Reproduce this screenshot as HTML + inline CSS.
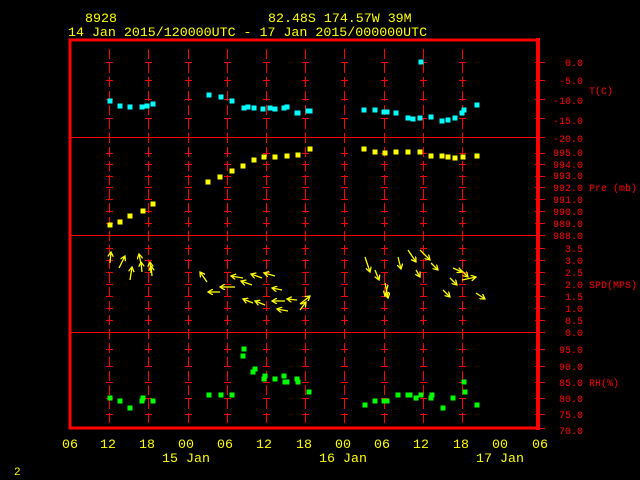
<!DOCTYPE html>
<html><head><meta charset="utf-8"><style>
html,body{margin:0;padding:0;background:#000;width:640px;height:480px;overflow:hidden}
svg{display:block}
text{font-family:"Liberation Mono",monospace}
.y{fill:#ffff00;font-size:13.3px}
.r{fill:#ff0000;font-size:10px}
</style></head><body>
<svg id="s" width="640" height="480" xmlns="http://www.w3.org/2000/svg">
<defs><marker id="ah" markerWidth="6" markerHeight="6" refX="5" refY="3" orient="auto" markerUnits="userSpaceOnUse"><path d="M0,0 L5,3 L0,6" fill="none" stroke="#ffff00" stroke-width="1.3"/></marker></defs>
<g id="grid"></g>
<rect x="70" y="40" width="468" height="388" fill="none" stroke="#ff0000" stroke-width="3"/>
<line x1="538" y1="38" x2="538" y2="430" stroke="#ff0000" stroke-width="4"/>
<g stroke="#ff0000" stroke-width="1"><line x1="70" y1="137.5" x2="538" y2="137.5"/><line x1="70" y1="235.5" x2="538" y2="235.5"/><line x1="70" y1="332.5" x2="538" y2="332.5"/></g>
<g id="data"></g>
<text class="y" x="85" y="22">8928</text>
<text class="y" x="268" y="22">82.48S  174.57W   39M</text>
<text class="y" x="68" y="36">14 Jan 2015/120000UTC - 17 Jan 2015/000000UTC</text>
<g class="r" text-anchor="end">
<text x="583" y="66">0.0</text><text x="583" y="84">-5.0</text><text x="583" y="104">-10.0</text><text x="583" y="124">-15.0</text><text x="583" y="142">-20.0</text>
<text x="583" y="156">995.0</text><text x="583" y="168">994.0</text><text x="583" y="179">993.0</text><text x="583" y="191">992.0</text><text x="583" y="203">991.0</text><text x="583" y="215">990.0</text><text x="583" y="227">989.0</text><text x="583" y="239">988.0</text>
<text x="583" y="252">3.5</text><text x="583" y="264">3.0</text><text x="583" y="276">2.5</text><text x="583" y="288">2.0</text><text x="583" y="300">1.5</text><text x="583" y="312">1.0</text><text x="583" y="324">0.5</text><text x="583" y="336">0.0</text>
<text x="583" y="353">95.0</text><text x="583" y="370">90.0</text><text x="583" y="386">85.0</text><text x="583" y="402">80.0</text><text x="583" y="418">75.0</text><text x="583" y="434">70.0</text>
</g>
<g class="r"><text x="589" y="94">T(C)</text><text x="589" y="191">Pre (mb)</text><text x="589" y="288">SPD(MPS)</text><text x="589" y="386">RH(%)</text></g>
<g class="y" text-anchor="middle">
<text x="70" y="448">06</text><text x="108" y="448">12</text><text x="147" y="448">18</text><text x="186" y="448">00</text><text x="225" y="448">06</text><text x="264" y="448">12</text><text x="304" y="448">18</text><text x="343" y="448">00</text><text x="382" y="448">06</text><text x="421" y="448">12</text><text x="461" y="448">18</text><text x="500" y="448">00</text><text x="540" y="448">06</text>
<text x="186" y="462">15 Jan</text><text x="343" y="462">16 Jan</text><text x="500" y="462">17 Jan</text>
</g>
<text class="y" x="14" y="475" style="font-size:11px">2</text>
</svg>
<script>
var NS="http://www.w3.org/2000/svg";
function el(p,t,a){var e=document.createElementNS(NS,t);for(var k in a)e.setAttribute(k,a[k]);p.appendChild(e);return e;}
var g=document.getElementById("grid"),d=document.getElementById("data");
var rows=[62,80,99,118,153,164,176,187,199,211,223,248,260,272,284,296,308,320,349,366,382,398,414];
for(var k=1;k<=11;k++){var x=70+39.2*k;x=Math.round(x)+0.5;
 if(k<11){el(g,"line",{x1:x,y1:49,x2:x,y2:425,stroke:"#f00","stroke-width":1,"stroke-dasharray":"10,4"});
 rows.forEach(function(y){el(g,"line",{x1:x-3.5,y1:y+0.5,x2:x+3.5,y2:y+0.5,stroke:"#f00"});});}}
rows.concat([137,235,332,428]).forEach(function(y){el(g,"line",{x1:535,y1:y+0.5,x2:545,y2:y+0.5,stroke:"#f00"});});
function sq(arr,c){arr.forEach(function(p){el(d,"rect",{x:p[0]-2.5,y:p[1]-2.5,width:5,height:5,fill:c});});}
sq([[110,101],[120,106],[130,107],[142,107],[147,106],[153,104],[209,95],[221,97],[232,101],[244,108],[248,107],[254,108],[263,109],[270,108],[275,109],[284,108],[287,107],[297,113],[298,113],[308,111],[310,111],[364,110],[375,110],[384,112],[387,112],[396,113],[408,118],[413,119],[420,118],[421,62],[431,117],[442,121],[448,120],[455,118],[462,113],[464,110],[477,105]],"#00ffff");
sq([[110,225],[120,222],[130,216],[143,211],[153,204],[208,182],[220,177],[232,171],[243,166],[254,160],[264,157],[275,157],[287,156],[298,155],[310,149],[364,149],[375,152],[385,153],[396,152],[408,152],[420,152],[431,156],[442,156],[448,157],[455,158],[463,157],[477,156]],"#ffff00");
sq([[110,398],[120,401],[130,408],[142,401],[143,398],[153,401],[209,395],[221,395],[232,395],[243,356],[244,349],[253,372],[255,369],[264,379],[265,376],[275,379],[284,376],[285,382],[287,382],[297,379],[298,382],[309,392],[365,405],[375,401],[384,401],[387,401],[398,395],[408,395],[410,395],[416,398],[421,395],[431,398],[432,395],[443,408],[453,398],[464,382],[465,392],[477,405]],"#00ff00");
[[110,263,111,252],[119,268,125,256],[130,280,132,267],[141,264,139,254],[142,272,141,262],[151,273,150,262],[152,276,151,266],
[207,282,200,272],[220,292,208,292],[235,287,220,287],[243,278,231,276],[252,285,241,281],[262,278,251,274],[275,276,264,273],[253,303,243,299],[265,305,255,301],[285,301,272,301],[297,300,287,299],[288,311,277,309],[300,310,306,302],[300,304,310,296],[282,290,272,288],
[365,257,370,272],[375,270,379,280],[385,283,388,298],[388,285,385,296],[398,257,401,269],[408,250,416,262],[420,250,430,260],[431,263,438,270],[416,270,420,277],[453,268,462,272],[450,278,457,285],[462,280,476,277],[443,290,450,297],[476,293,485,299],[461,270,468,277]
].forEach(function(a){el(d,"line",{x1:a[0],y1:a[1],x2:a[2],y2:a[3],stroke:"#ffff00","stroke-width":1.3,"marker-end":"url(#ah)"});});
</script>
</body></html>
